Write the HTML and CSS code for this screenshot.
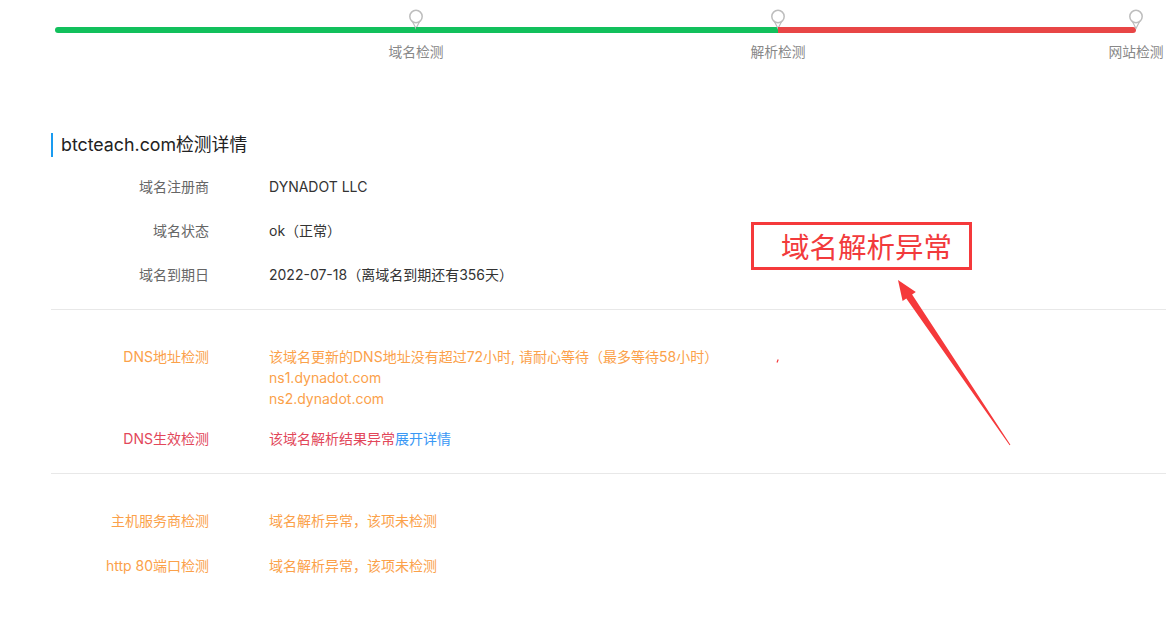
FILE: index.html
```html
<!DOCTYPE html>
<html lang="zh-CN">
<head>
<meta charset="utf-8">
<title>btcteach.com检测详情</title>
<link rel="stylesheet" href="styles.css">
</head>
<body>
<div class="page">
  <div class="progress">
    <div class="step ok">
      <div class="bar"></div>
      <svg class="pin" width="16" height="22" viewBox="0 0 16 22"><path d="M4.4 12.4 L8 19.5 L11.6 12.4" fill="#fff" stroke="#bdbdbd" stroke-width="1.2"/><circle cx="8" cy="7.5" r="6.2" fill="#fff" stroke="#bdbdbd" stroke-width="1.5"/></svg>
      <span class="step-label">域名检测</span>
    </div>
    <div class="step ok">
      <div class="bar"></div>
      <svg class="pin" width="16" height="22" viewBox="0 0 16 22"><path d="M4.4 12.4 L8 19.5 L11.6 12.4" fill="#fff" stroke="#bdbdbd" stroke-width="1.2"/><circle cx="8" cy="7.5" r="6.2" fill="#fff" stroke="#bdbdbd" stroke-width="1.5"/></svg>
      <span class="step-label">解析检测</span>
    </div>
    <div class="step bad">
      <div class="bar"></div>
      <svg class="pin" width="16" height="22" viewBox="0 0 16 22"><path d="M4.4 12.4 L8 19.5 L11.6 12.4" fill="#fff" stroke="#bdbdbd" stroke-width="1.2"/><circle cx="8" cy="7.5" r="6.2" fill="#fff" stroke="#bdbdbd" stroke-width="1.5"/></svg>
      <span class="step-label">网站检测</span>
    </div>
  </div>

  <div class="detail">
    <h2 class="title">btcteach.com检测详情</h2>

    <div class="group group-first">
      <div class="row"><div class="label">域名注册商</div><div class="value">DYNADOT LLC</div></div>
      <div class="row"><div class="label">域名状态</div><div class="value">ok（正常）</div></div>
      <div class="row"><div class="label">域名到期日</div><div class="value">2022-07-18（离域名到期还有356天）</div></div>
    </div>

    <div class="group group-dns">
      <div class="row warn">
        <div class="label">DNS地址检测</div>
        <div class="value">该域名更新的DNS地址没有超过72小时, 请耐心等待（最多等待58小时）<br>ns1.dynadot.com<br>ns2.dynadot.com</div>
      </div>
      <div class="row error">
        <div class="label">DNS生效检测</div>
        <div class="value">该域名解析结果异常<a class="more" href="#">展开详情</a></div>
      </div>
    </div>

    <div class="group group-last">
      <div class="row warn"><div class="label">主机服务商检测</div><div class="value">域名解析异常，该项未检测</div></div>
      <div class="row warn"><div class="label">http 80端口检测</div><div class="value">域名解析异常，该项未检测</div></div>
    </div>
  </div>

  <div class="callout">域名解析异常</div>
  <svg class="arrow" width="1166" height="641" viewBox="0 0 1166 641">
    <polygon points="898,280 915.8,292.1 912.1,294.6 1010.4,444.7 1009.6,445.3 906.3,298.6 902.6,301.1" fill="#f5393b"/>
    <path d="M777 362.5 L778.2 359.5" stroke="#f5393b" stroke-width="1.2"/>
  </svg>
</div>
</body>
</html>
```

FILE: styles.css
```css
html, body {
  margin: 0;
  padding: 0;
  background: #fff;
}

body {
  font-family: Inter, "Noto Sans CJK SC", sans-serif;
  font-size: 14px;
  color: #333;
}

.page {
  position: relative;
  width: 1166px;
  height: 641px;
  overflow: hidden;
}

/* progress track */
.progress {
  display: flex;
  margin-left: 55px;
  width: 1081px;
  padding-top: 27px;
  height: 60px;
  box-sizing: border-box;
}

.step {
  position: relative;
  height: 6px;
}

.step:nth-child(1) { width: 361px; }
.step:nth-child(2) { width: 362px; }
.step:nth-child(3) { width: 358px; }

.bar {
  height: 6px;
}

.ok .bar { background: #12c05c; }
.bad .bar { background: #e84646; }

.step:first-child .bar { border-radius: 3px 0 0 3px; }
.step:last-child .bar { border-radius: 0 4px 4px 0; }

.pin {
  position: absolute;
  right: -8px;
  top: -18px;
}

.step-label {
  position: absolute;
  left: 100%;
  top: 15px;
  transform: translateX(-50%);
  white-space: nowrap;
  line-height: 20px;
  color: #888;
  font-size: 13.8px;
}

/* details */
.detail {
  margin-left: 51px;
  padding-top: 73px;
}

.title {
  margin: 0;
  height: 24px;
  line-height: 24px;
  border-left: 2px solid #1a9bf0;
  padding-left: 8px;
  font-size: 17.8px;
  font-weight: normal;
  color: #222;
}

.group {
  display: flex;
  flex-direction: column;
  border-bottom: 1px solid #e8e8e8;
}

.group-first {
  padding-top: 19px;
  padding-bottom: 24px;
  gap: 23px;
}

.group-dns {
  padding-top: 36px;
  padding-bottom: 24px;
  gap: 19px;
}

.group-last {
  padding-top: 36px;
  gap: 24px;
  border-bottom: none;
}

.row {
  display: grid;
  grid-template-columns: 158px 1fr;
  column-gap: 60px;
  line-height: 21px;
}

.label {
  text-align: right;
  color: #666;
}

.value {
  color: #333;
}

.warn .label,
.warn .value {
  color: #fba14a;
}

.error .label,
.error .value {
  color: #e2475a;
}

.more {
  color: #3a98f5;
  text-decoration: none;
}

/* annotation overlay */
.callout {
  position: absolute;
  left: 751px;
  top: 222px;
  width: 221px;
  height: 48px;
  box-sizing: border-box;
  border: 3px solid #f5393b;
  padding-left: 27px;
  line-height: 42px;
  font-family: "Noto Sans CJK SC", sans-serif;
  font-size: 28.5px;
  color: #f23a3c;
  white-space: nowrap;
}

.arrow {
  position: absolute;
  left: 0;
  top: 0;
  pointer-events: none;
}
```
